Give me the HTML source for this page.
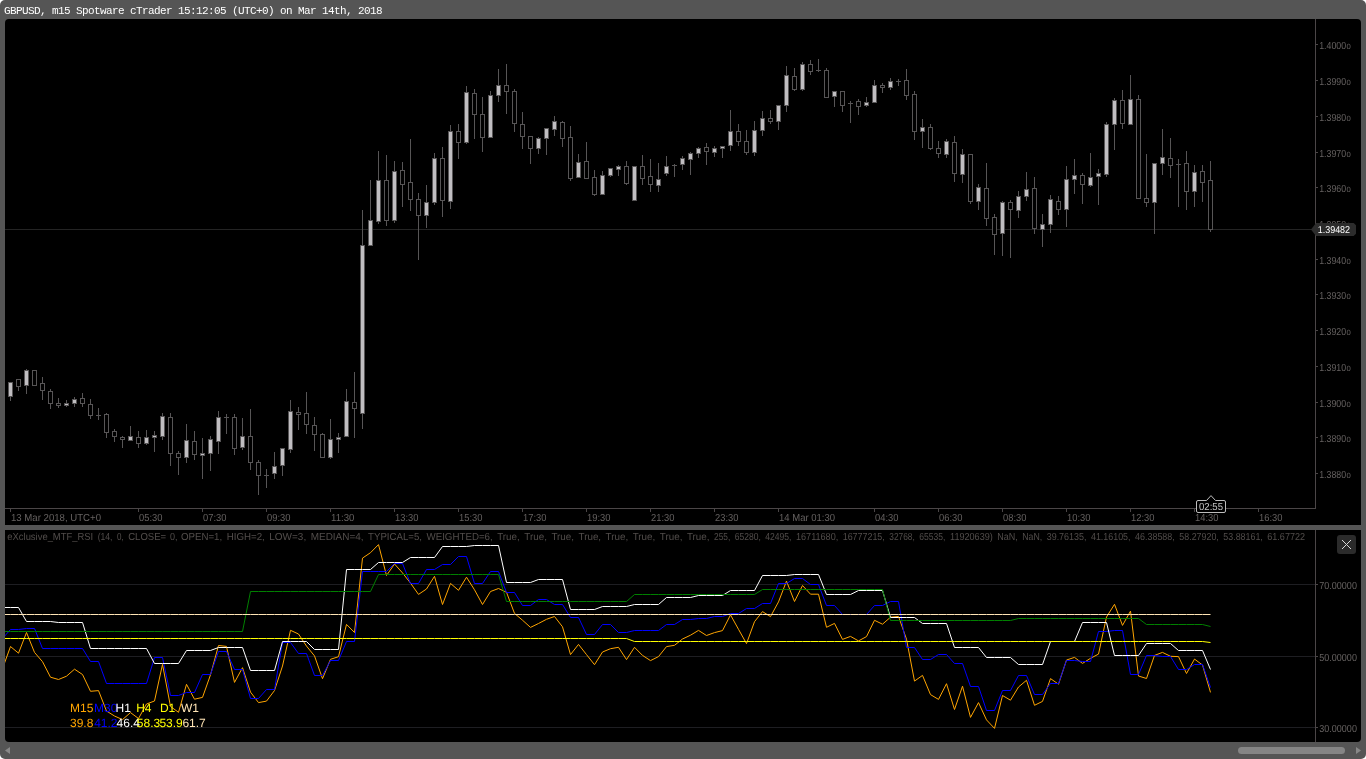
<!DOCTYPE html>
<html lang="en"><head><meta charset="utf-8"><title>GBPUSD m15 cTrader chart</title>
<style>
html,body{margin:0;padding:0;background:#fff;}
body{width:1366px;height:759px;overflow:hidden;position:relative;}
#app{position:absolute;left:0;top:0;width:1366px;height:759px;background:#555;border-radius:5px;overflow:hidden;}
#title{position:absolute;left:4.3px;top:3.7px;will-change:transform;font:11px/14px "Liberation Mono","DejaVu Sans Mono",monospace;color:#fff;white-space:pre;letter-spacing:-0.6px;}
.panel{position:absolute;background:#000;border-radius:3px;}
#p1{left:5px;top:19px;width:1356px;height:506px;border-radius:4px 4px 0 0;}
#p2{left:5px;top:530px;width:1356px;height:212px;border-radius:0 0 4px 4px;}
svg{position:absolute;left:0;top:0;will-change:transform;}
text{font-family:"Liberation Sans",sans-serif;text-rendering:geometricPrecision;}
.ax{font-size:10.2px;fill:#656160;}
.sm{font-size:7.6px;fill:#656160;}
.lg{font-size:12px;}
</style></head><body>
<div id="app">
<div id="title">GBPUSD, m15 Spotware cTrader 15:12:05 (UTC+0) on Mar 14th, 2018</div>
<div class="panel" id="p1"></div><div class="panel" id="p2"></div>
<svg width="1366" height="759" viewBox="0 0 1366 759">
<g shape-rendering="crispEdges" fill="#4b4647">
<rect x="1315" y="19" width="1" height="490"/>
<rect x="5" y="508" width="1311" height="1"/>
<rect x="1316" y="44" width="2" height="1"/>
<rect x="1316" y="80" width="2" height="1"/>
<rect x="1316" y="116" width="2" height="1"/>
<rect x="1316" y="152" width="2" height="1"/>
<rect x="1316" y="187" width="2" height="1"/>
<rect x="1316" y="223" width="2" height="1"/>
<rect x="1316" y="259" width="2" height="1"/>
<rect x="1316" y="294" width="2" height="1"/>
<rect x="1316" y="330" width="2" height="1"/>
<rect x="1316" y="366" width="2" height="1"/>
<rect x="1316" y="402" width="2" height="1"/>
<rect x="1316" y="437" width="2" height="1"/>
<rect x="1316" y="473" width="2" height="1"/>
<rect x="10" y="509" width="1" height="3"/>
<rect x="138" y="509" width="1" height="3"/>
<rect x="202" y="509" width="1" height="3"/>
<rect x="266" y="509" width="1" height="3"/>
<rect x="330" y="509" width="1" height="3"/>
<rect x="394" y="509" width="1" height="3"/>
<rect x="458" y="509" width="1" height="3"/>
<rect x="522" y="509" width="1" height="3"/>
<rect x="586" y="509" width="1" height="3"/>
<rect x="650" y="509" width="1" height="3"/>
<rect x="714" y="509" width="1" height="3"/>
<rect x="778" y="509" width="1" height="3"/>
<rect x="874" y="509" width="1" height="3"/>
<rect x="938" y="509" width="1" height="3"/>
<rect x="1002" y="509" width="1" height="3"/>
<rect x="1066" y="509" width="1" height="3"/>
<rect x="1130" y="509" width="1" height="3"/>
<rect x="1194" y="509" width="1" height="3"/>
<rect x="1258" y="509" width="1" height="3"/>
</g>
<rect x="5" y="229" width="1310" height="1" fill="#242424" shape-rendering="crispEdges"/>
<text class="ax" x="1319.2" y="49.1" textLength="26.9" lengthAdjust="spacingAndGlyphs">1.4000</text><text class="sm" x="1346.6" y="49.1" textLength="4.3" lengthAdjust="spacingAndGlyphs">0</text>
<text class="ax" x="1319.2" y="85.1" textLength="26.9" lengthAdjust="spacingAndGlyphs">1.3990</text><text class="sm" x="1346.6" y="85.1" textLength="4.3" lengthAdjust="spacingAndGlyphs">0</text>
<text class="ax" x="1319.2" y="121.1" textLength="26.9" lengthAdjust="spacingAndGlyphs">1.3980</text><text class="sm" x="1346.6" y="121.1" textLength="4.3" lengthAdjust="spacingAndGlyphs">0</text>
<text class="ax" x="1319.2" y="157.1" textLength="26.9" lengthAdjust="spacingAndGlyphs">1.3970</text><text class="sm" x="1346.6" y="157.1" textLength="4.3" lengthAdjust="spacingAndGlyphs">0</text>
<text class="ax" x="1319.2" y="192.1" textLength="26.9" lengthAdjust="spacingAndGlyphs">1.3960</text><text class="sm" x="1346.6" y="192.1" textLength="4.3" lengthAdjust="spacingAndGlyphs">0</text>
<text class="ax" x="1319.2" y="228.1" textLength="26.9" lengthAdjust="spacingAndGlyphs">1.3950</text><text class="sm" x="1346.6" y="228.1" textLength="4.3" lengthAdjust="spacingAndGlyphs">0</text>
<text class="ax" x="1319.2" y="264.1" textLength="26.9" lengthAdjust="spacingAndGlyphs">1.3940</text><text class="sm" x="1346.6" y="264.1" textLength="4.3" lengthAdjust="spacingAndGlyphs">0</text>
<text class="ax" x="1319.2" y="299.1" textLength="26.9" lengthAdjust="spacingAndGlyphs">1.3930</text><text class="sm" x="1346.6" y="299.1" textLength="4.3" lengthAdjust="spacingAndGlyphs">0</text>
<text class="ax" x="1319.2" y="335.1" textLength="26.9" lengthAdjust="spacingAndGlyphs">1.3920</text><text class="sm" x="1346.6" y="335.1" textLength="4.3" lengthAdjust="spacingAndGlyphs">0</text>
<text class="ax" x="1319.2" y="371.1" textLength="26.9" lengthAdjust="spacingAndGlyphs">1.3910</text><text class="sm" x="1346.6" y="371.1" textLength="4.3" lengthAdjust="spacingAndGlyphs">0</text>
<text class="ax" x="1319.2" y="407.1" textLength="26.9" lengthAdjust="spacingAndGlyphs">1.3900</text><text class="sm" x="1346.6" y="407.1" textLength="4.3" lengthAdjust="spacingAndGlyphs">0</text>
<text class="ax" x="1319.2" y="442.1" textLength="26.9" lengthAdjust="spacingAndGlyphs">1.3890</text><text class="sm" x="1346.6" y="442.1" textLength="4.3" lengthAdjust="spacingAndGlyphs">0</text>
<text class="ax" x="1319.2" y="478.1" textLength="26.9" lengthAdjust="spacingAndGlyphs">1.3880</text><text class="sm" x="1346.6" y="478.1" textLength="4.3" lengthAdjust="spacingAndGlyphs">0</text>
<text class="ax" x="11" y="521.1" textLength="90" lengthAdjust="spacingAndGlyphs">13 Mar 2018, UTC+0</text>
<text class="ax" x="139" y="521.1" textLength="23.4" lengthAdjust="spacingAndGlyphs">05:30</text>
<text class="ax" x="203" y="521.1" textLength="23.4" lengthAdjust="spacingAndGlyphs">07:30</text>
<text class="ax" x="267" y="521.1" textLength="23.4" lengthAdjust="spacingAndGlyphs">09:30</text>
<text class="ax" x="331" y="521.1" textLength="23.4" lengthAdjust="spacingAndGlyphs">11:30</text>
<text class="ax" x="395" y="521.1" textLength="23.4" lengthAdjust="spacingAndGlyphs">13:30</text>
<text class="ax" x="459" y="521.1" textLength="23.4" lengthAdjust="spacingAndGlyphs">15:30</text>
<text class="ax" x="523" y="521.1" textLength="23.4" lengthAdjust="spacingAndGlyphs">17:30</text>
<text class="ax" x="587" y="521.1" textLength="23.4" lengthAdjust="spacingAndGlyphs">19:30</text>
<text class="ax" x="651" y="521.1" textLength="23.4" lengthAdjust="spacingAndGlyphs">21:30</text>
<text class="ax" x="715" y="521.1" textLength="23.4" lengthAdjust="spacingAndGlyphs">23:30</text>
<text class="ax" x="779" y="521.1" textLength="56" lengthAdjust="spacingAndGlyphs">14 Mar 01:30</text>
<text class="ax" x="875" y="521.1" textLength="23.4" lengthAdjust="spacingAndGlyphs">04:30</text>
<text class="ax" x="939" y="521.1" textLength="23.4" lengthAdjust="spacingAndGlyphs">06:30</text>
<text class="ax" x="1003" y="521.1" textLength="23.4" lengthAdjust="spacingAndGlyphs">08:30</text>
<text class="ax" x="1067" y="521.1" textLength="23.4" lengthAdjust="spacingAndGlyphs">10:30</text>
<text class="ax" x="1131" y="521.1" textLength="23.4" lengthAdjust="spacingAndGlyphs">12:30</text>
<text class="ax" x="1195" y="521.1" textLength="23.4" lengthAdjust="spacingAndGlyphs">14:30</text>
<text class="ax" x="1259" y="521.1" textLength="23.4" lengthAdjust="spacingAndGlyphs">16:30</text>
<g shape-rendering="crispEdges">
<rect x="10" y="382" width="1" height="19" fill="#575556"/>
<rect x="8" y="382" width="5" height="15" fill="#575556"/>
<rect x="9" y="383" width="3" height="13" fill="#c0bec1"/>
<rect x="18" y="379" width="1" height="12" fill="#575556"/>
<rect x="16" y="379" width="5" height="8" fill="#575556"/>
<rect x="17" y="380" width="3" height="6" fill="#000"/>
<rect x="26" y="369" width="1" height="25" fill="#575556"/>
<rect x="24" y="370" width="5" height="16" fill="#575556"/>
<rect x="25" y="371" width="3" height="14" fill="#c0bec1"/>
<rect x="34" y="370" width="1" height="16" fill="#575556"/>
<rect x="32" y="370" width="5" height="16" fill="#575556"/>
<rect x="33" y="371" width="3" height="14" fill="#000"/>
<rect x="42" y="377" width="1" height="23" fill="#575556"/>
<rect x="40" y="383" width="5" height="8" fill="#575556"/>
<rect x="41" y="384" width="3" height="6" fill="#000"/>
<rect x="50" y="389" width="1" height="20" fill="#575556"/>
<rect x="48" y="391" width="5" height="13" fill="#575556"/>
<rect x="49" y="392" width="3" height="11" fill="#000"/>
<rect x="58" y="398" width="1" height="10" fill="#575556"/>
<rect x="56" y="403" width="5" height="3" fill="#575556"/>
<rect x="57" y="404" width="3" height="1" fill="#000"/>
<rect x="66" y="400" width="1" height="7" fill="#575556"/>
<rect x="64" y="403" width="5" height="3" fill="#575556"/>
<rect x="65" y="404" width="3" height="1" fill="#c0bec1"/>
<rect x="74" y="397" width="1" height="10" fill="#575556"/>
<rect x="72" y="399" width="5" height="5" fill="#575556"/>
<rect x="73" y="400" width="3" height="3" fill="#c0bec1"/>
<rect x="82" y="393" width="1" height="14" fill="#575556"/>
<rect x="80" y="398" width="5" height="6" fill="#575556"/>
<rect x="81" y="399" width="3" height="4" fill="#000"/>
<rect x="90" y="399" width="1" height="20" fill="#575556"/>
<rect x="88" y="404" width="5" height="12" fill="#575556"/>
<rect x="89" y="405" width="3" height="10" fill="#000"/>
<rect x="98" y="408" width="1" height="12" fill="#575556"/>
<rect x="96" y="415" width="5" height="1" fill="#575556"/>
<rect x="106" y="413" width="1" height="25" fill="#575556"/>
<rect x="104" y="414" width="5" height="19" fill="#575556"/>
<rect x="105" y="415" width="3" height="17" fill="#000"/>
<rect x="114" y="429" width="1" height="13" fill="#575556"/>
<rect x="112" y="431" width="5" height="6" fill="#575556"/>
<rect x="113" y="432" width="3" height="4" fill="#000"/>
<rect x="122" y="436" width="1" height="12" fill="#575556"/>
<rect x="120" y="437" width="5" height="3" fill="#575556"/>
<rect x="121" y="438" width="3" height="1" fill="#000"/>
<rect x="130" y="426" width="1" height="15" fill="#575556"/>
<rect x="128" y="436" width="5" height="5" fill="#575556"/>
<rect x="129" y="437" width="3" height="3" fill="#c0bec1"/>
<rect x="138" y="431" width="1" height="17" fill="#575556"/>
<rect x="136" y="437" width="5" height="7" fill="#575556"/>
<rect x="137" y="438" width="3" height="5" fill="#000"/>
<rect x="146" y="430" width="1" height="15" fill="#575556"/>
<rect x="144" y="437" width="5" height="7" fill="#575556"/>
<rect x="145" y="438" width="3" height="5" fill="#c0bec1"/>
<rect x="154" y="431" width="1" height="21" fill="#575556"/>
<rect x="152" y="435" width="5" height="3" fill="#575556"/>
<rect x="153" y="436" width="3" height="1" fill="#c0bec1"/>
<rect x="162" y="413" width="1" height="27" fill="#575556"/>
<rect x="160" y="416" width="5" height="21" fill="#575556"/>
<rect x="161" y="417" width="3" height="19" fill="#c0bec1"/>
<rect x="170" y="413" width="1" height="53" fill="#575556"/>
<rect x="168" y="417" width="5" height="37" fill="#575556"/>
<rect x="169" y="418" width="3" height="35" fill="#000"/>
<rect x="178" y="451" width="1" height="24" fill="#575556"/>
<rect x="176" y="453" width="5" height="5" fill="#575556"/>
<rect x="177" y="454" width="3" height="3" fill="#000"/>
<rect x="186" y="424" width="1" height="39" fill="#575556"/>
<rect x="184" y="440" width="5" height="18" fill="#575556"/>
<rect x="185" y="441" width="3" height="16" fill="#c0bec1"/>
<rect x="194" y="431" width="1" height="29" fill="#575556"/>
<rect x="192" y="441" width="5" height="14" fill="#575556"/>
<rect x="193" y="442" width="3" height="12" fill="#000"/>
<rect x="202" y="438" width="1" height="41" fill="#575556"/>
<rect x="200" y="453" width="5" height="3" fill="#575556"/>
<rect x="201" y="454" width="3" height="1" fill="#c0bec1"/>
<rect x="210" y="436" width="1" height="35" fill="#575556"/>
<rect x="208" y="439" width="5" height="15" fill="#575556"/>
<rect x="209" y="440" width="3" height="13" fill="#c0bec1"/>
<rect x="218" y="411" width="1" height="43" fill="#575556"/>
<rect x="216" y="417" width="5" height="25" fill="#575556"/>
<rect x="217" y="418" width="3" height="23" fill="#c0bec1"/>
<rect x="226" y="414" width="1" height="20" fill="#575556"/>
<rect x="224" y="417" width="5" height="1" fill="#575556"/>
<rect x="234" y="414" width="1" height="41" fill="#575556"/>
<rect x="232" y="417" width="5" height="32" fill="#575556"/>
<rect x="233" y="418" width="3" height="30" fill="#000"/>
<rect x="242" y="418" width="1" height="32" fill="#575556"/>
<rect x="240" y="436" width="5" height="12" fill="#575556"/>
<rect x="241" y="437" width="3" height="10" fill="#c0bec1"/>
<rect x="250" y="409" width="1" height="61" fill="#575556"/>
<rect x="248" y="436" width="5" height="27" fill="#575556"/>
<rect x="249" y="437" width="3" height="25" fill="#000"/>
<rect x="258" y="460" width="1" height="35" fill="#575556"/>
<rect x="256" y="462" width="5" height="14" fill="#575556"/>
<rect x="257" y="463" width="3" height="12" fill="#000"/>
<rect x="266" y="469" width="1" height="19" fill="#575556"/>
<rect x="264" y="475" width="5" height="1" fill="#575556"/>
<rect x="274" y="452" width="1" height="27" fill="#575556"/>
<rect x="272" y="466" width="5" height="8" fill="#575556"/>
<rect x="273" y="467" width="3" height="6" fill="#c0bec1"/>
<rect x="282" y="448" width="1" height="28" fill="#575556"/>
<rect x="280" y="448" width="5" height="18" fill="#575556"/>
<rect x="281" y="449" width="3" height="16" fill="#c0bec1"/>
<rect x="290" y="400" width="1" height="53" fill="#575556"/>
<rect x="288" y="411" width="5" height="39" fill="#575556"/>
<rect x="289" y="412" width="3" height="37" fill="#c0bec1"/>
<rect x="298" y="407" width="1" height="23" fill="#575556"/>
<rect x="296" y="412" width="5" height="3" fill="#575556"/>
<rect x="297" y="413" width="3" height="1" fill="#000"/>
<rect x="306" y="392" width="1" height="42" fill="#575556"/>
<rect x="304" y="413" width="5" height="12" fill="#575556"/>
<rect x="305" y="414" width="3" height="10" fill="#000"/>
<rect x="314" y="417" width="1" height="34" fill="#575556"/>
<rect x="312" y="425" width="5" height="10" fill="#575556"/>
<rect x="313" y="426" width="3" height="8" fill="#000"/>
<rect x="322" y="433" width="1" height="25" fill="#575556"/>
<rect x="320" y="434" width="5" height="24" fill="#575556"/>
<rect x="321" y="435" width="3" height="22" fill="#000"/>
<rect x="330" y="419" width="1" height="40" fill="#575556"/>
<rect x="328" y="439" width="5" height="19" fill="#575556"/>
<rect x="329" y="440" width="3" height="17" fill="#c0bec1"/>
<rect x="338" y="433" width="1" height="20" fill="#575556"/>
<rect x="336" y="437" width="5" height="3" fill="#575556"/>
<rect x="337" y="438" width="3" height="1" fill="#c0bec1"/>
<rect x="346" y="389" width="1" height="48" fill="#575556"/>
<rect x="344" y="401" width="5" height="36" fill="#575556"/>
<rect x="345" y="402" width="3" height="34" fill="#c0bec1"/>
<rect x="354" y="372" width="1" height="66" fill="#575556"/>
<rect x="352" y="402" width="5" height="7" fill="#575556"/>
<rect x="353" y="403" width="3" height="5" fill="#000"/>
<rect x="362" y="210" width="1" height="219" fill="#575556"/>
<rect x="360" y="245" width="5" height="169" fill="#575556"/>
<rect x="361" y="246" width="3" height="167" fill="#c0bec1"/>
<rect x="370" y="180" width="1" height="66" fill="#575556"/>
<rect x="368" y="220" width="5" height="26" fill="#575556"/>
<rect x="369" y="221" width="3" height="24" fill="#c0bec1"/>
<rect x="378" y="151" width="1" height="73" fill="#575556"/>
<rect x="376" y="180" width="5" height="42" fill="#575556"/>
<rect x="377" y="181" width="3" height="40" fill="#c0bec1"/>
<rect x="386" y="155" width="1" height="71" fill="#575556"/>
<rect x="384" y="180" width="5" height="41" fill="#575556"/>
<rect x="385" y="181" width="3" height="39" fill="#000"/>
<rect x="394" y="161" width="1" height="62" fill="#575556"/>
<rect x="392" y="171" width="5" height="50" fill="#575556"/>
<rect x="393" y="172" width="3" height="48" fill="#c0bec1"/>
<rect x="402" y="162" width="1" height="45" fill="#575556"/>
<rect x="400" y="170" width="5" height="15" fill="#575556"/>
<rect x="401" y="171" width="3" height="13" fill="#000"/>
<rect x="410" y="139" width="1" height="72" fill="#575556"/>
<rect x="408" y="182" width="5" height="18" fill="#575556"/>
<rect x="409" y="183" width="3" height="16" fill="#000"/>
<rect x="418" y="193" width="1" height="67" fill="#575556"/>
<rect x="416" y="199" width="5" height="17" fill="#575556"/>
<rect x="417" y="200" width="3" height="15" fill="#000"/>
<rect x="426" y="185" width="1" height="43" fill="#575556"/>
<rect x="424" y="202" width="5" height="14" fill="#575556"/>
<rect x="425" y="203" width="3" height="12" fill="#c0bec1"/>
<rect x="434" y="153" width="1" height="52" fill="#575556"/>
<rect x="432" y="158" width="5" height="45" fill="#575556"/>
<rect x="433" y="159" width="3" height="43" fill="#c0bec1"/>
<rect x="442" y="147" width="1" height="70" fill="#575556"/>
<rect x="440" y="158" width="5" height="43" fill="#575556"/>
<rect x="441" y="159" width="3" height="41" fill="#000"/>
<rect x="450" y="125" width="1" height="84" fill="#575556"/>
<rect x="448" y="131" width="5" height="71" fill="#575556"/>
<rect x="449" y="132" width="3" height="69" fill="#c0bec1"/>
<rect x="458" y="124" width="1" height="35" fill="#575556"/>
<rect x="456" y="131" width="5" height="12" fill="#575556"/>
<rect x="457" y="132" width="3" height="10" fill="#000"/>
<rect x="466" y="86" width="1" height="58" fill="#575556"/>
<rect x="464" y="92" width="5" height="51" fill="#575556"/>
<rect x="465" y="93" width="3" height="49" fill="#c0bec1"/>
<rect x="474" y="89" width="1" height="50" fill="#575556"/>
<rect x="472" y="93" width="5" height="22" fill="#575556"/>
<rect x="473" y="94" width="3" height="20" fill="#000"/>
<rect x="482" y="97" width="1" height="55" fill="#575556"/>
<rect x="480" y="114" width="5" height="24" fill="#575556"/>
<rect x="481" y="115" width="3" height="22" fill="#000"/>
<rect x="490" y="91" width="1" height="47" fill="#575556"/>
<rect x="488" y="95" width="5" height="43" fill="#575556"/>
<rect x="489" y="96" width="3" height="41" fill="#c0bec1"/>
<rect x="498" y="69" width="1" height="33" fill="#575556"/>
<rect x="496" y="85" width="5" height="11" fill="#575556"/>
<rect x="497" y="86" width="3" height="9" fill="#c0bec1"/>
<rect x="506" y="64" width="1" height="50" fill="#575556"/>
<rect x="504" y="85" width="5" height="7" fill="#575556"/>
<rect x="505" y="86" width="3" height="5" fill="#000"/>
<rect x="514" y="89" width="1" height="43" fill="#575556"/>
<rect x="512" y="91" width="5" height="33" fill="#575556"/>
<rect x="513" y="92" width="3" height="31" fill="#000"/>
<rect x="522" y="112" width="1" height="37" fill="#575556"/>
<rect x="520" y="124" width="5" height="13" fill="#575556"/>
<rect x="521" y="125" width="3" height="11" fill="#000"/>
<rect x="530" y="136" width="1" height="28" fill="#575556"/>
<rect x="528" y="136" width="5" height="13" fill="#575556"/>
<rect x="529" y="137" width="3" height="11" fill="#000"/>
<rect x="538" y="137" width="1" height="17" fill="#575556"/>
<rect x="536" y="138" width="5" height="11" fill="#575556"/>
<rect x="537" y="139" width="3" height="9" fill="#c0bec1"/>
<rect x="546" y="128" width="1" height="27" fill="#575556"/>
<rect x="544" y="128" width="5" height="11" fill="#575556"/>
<rect x="545" y="129" width="3" height="9" fill="#c0bec1"/>
<rect x="554" y="116" width="1" height="20" fill="#575556"/>
<rect x="552" y="121" width="5" height="9" fill="#575556"/>
<rect x="553" y="122" width="3" height="7" fill="#c0bec1"/>
<rect x="562" y="121" width="1" height="26" fill="#575556"/>
<rect x="560" y="122" width="5" height="17" fill="#575556"/>
<rect x="561" y="123" width="3" height="15" fill="#000"/>
<rect x="570" y="126" width="1" height="55" fill="#575556"/>
<rect x="568" y="137" width="5" height="42" fill="#575556"/>
<rect x="569" y="138" width="3" height="40" fill="#000"/>
<rect x="578" y="154" width="1" height="24" fill="#575556"/>
<rect x="576" y="162" width="5" height="16" fill="#575556"/>
<rect x="577" y="163" width="3" height="14" fill="#c0bec1"/>
<rect x="586" y="142" width="1" height="37" fill="#575556"/>
<rect x="584" y="161" width="5" height="18" fill="#575556"/>
<rect x="585" y="162" width="3" height="16" fill="#000"/>
<rect x="594" y="170" width="1" height="26" fill="#575556"/>
<rect x="592" y="177" width="5" height="18" fill="#575556"/>
<rect x="593" y="178" width="3" height="16" fill="#000"/>
<rect x="602" y="171" width="1" height="24" fill="#575556"/>
<rect x="600" y="175" width="5" height="20" fill="#575556"/>
<rect x="601" y="176" width="3" height="18" fill="#c0bec1"/>
<rect x="610" y="168" width="1" height="9" fill="#575556"/>
<rect x="608" y="168" width="5" height="8" fill="#575556"/>
<rect x="609" y="169" width="3" height="6" fill="#c0bec1"/>
<rect x="618" y="165" width="1" height="11" fill="#575556"/>
<rect x="616" y="166" width="5" height="4" fill="#575556"/>
<rect x="617" y="167" width="3" height="2" fill="#c0bec1"/>
<rect x="626" y="161" width="1" height="24" fill="#575556"/>
<rect x="624" y="166" width="5" height="18" fill="#575556"/>
<rect x="625" y="167" width="3" height="16" fill="#000"/>
<rect x="634" y="166" width="1" height="35" fill="#575556"/>
<rect x="632" y="166" width="5" height="35" fill="#575556"/>
<rect x="633" y="167" width="3" height="33" fill="#c0bec1"/>
<rect x="642" y="155" width="1" height="30" fill="#575556"/>
<rect x="640" y="166" width="5" height="13" fill="#575556"/>
<rect x="641" y="167" width="3" height="11" fill="#000"/>
<rect x="650" y="159" width="1" height="33" fill="#575556"/>
<rect x="648" y="176" width="5" height="9" fill="#575556"/>
<rect x="649" y="177" width="3" height="7" fill="#000"/>
<rect x="658" y="163" width="1" height="29" fill="#575556"/>
<rect x="656" y="179" width="5" height="7" fill="#575556"/>
<rect x="657" y="180" width="3" height="5" fill="#c0bec1"/>
<rect x="666" y="156" width="1" height="20" fill="#575556"/>
<rect x="664" y="166" width="5" height="8" fill="#575556"/>
<rect x="665" y="167" width="3" height="6" fill="#c0bec1"/>
<rect x="674" y="164" width="1" height="13" fill="#575556"/>
<rect x="672" y="165" width="5" height="1" fill="#575556"/>
<rect x="682" y="156" width="1" height="14" fill="#575556"/>
<rect x="680" y="158" width="5" height="7" fill="#575556"/>
<rect x="681" y="159" width="3" height="5" fill="#c0bec1"/>
<rect x="690" y="152" width="1" height="23" fill="#575556"/>
<rect x="688" y="153" width="5" height="7" fill="#575556"/>
<rect x="689" y="154" width="3" height="5" fill="#c0bec1"/>
<rect x="698" y="147" width="1" height="11" fill="#575556"/>
<rect x="696" y="148" width="5" height="6" fill="#575556"/>
<rect x="697" y="149" width="3" height="4" fill="#c0bec1"/>
<rect x="706" y="143" width="1" height="22" fill="#575556"/>
<rect x="704" y="147" width="5" height="5" fill="#575556"/>
<rect x="705" y="148" width="3" height="3" fill="#000"/>
<rect x="714" y="146" width="1" height="11" fill="#575556"/>
<rect x="712" y="148" width="5" height="5" fill="#575556"/>
<rect x="713" y="149" width="3" height="3" fill="#c0bec1"/>
<rect x="722" y="146" width="1" height="12" fill="#575556"/>
<rect x="720" y="146" width="5" height="3" fill="#575556"/>
<rect x="721" y="147" width="3" height="1" fill="#c0bec1"/>
<rect x="730" y="110" width="1" height="41" fill="#575556"/>
<rect x="728" y="131" width="5" height="15" fill="#575556"/>
<rect x="729" y="132" width="3" height="13" fill="#c0bec1"/>
<rect x="738" y="124" width="1" height="22" fill="#575556"/>
<rect x="736" y="131" width="5" height="11" fill="#575556"/>
<rect x="737" y="132" width="3" height="9" fill="#000"/>
<rect x="746" y="130" width="1" height="25" fill="#575556"/>
<rect x="744" y="141" width="5" height="12" fill="#575556"/>
<rect x="745" y="142" width="3" height="10" fill="#000"/>
<rect x="754" y="121" width="1" height="35" fill="#575556"/>
<rect x="752" y="130" width="5" height="23" fill="#575556"/>
<rect x="753" y="131" width="3" height="21" fill="#c0bec1"/>
<rect x="762" y="111" width="1" height="25" fill="#575556"/>
<rect x="760" y="118" width="5" height="13" fill="#575556"/>
<rect x="761" y="119" width="3" height="11" fill="#c0bec1"/>
<rect x="770" y="110" width="1" height="14" fill="#575556"/>
<rect x="768" y="118" width="5" height="4" fill="#575556"/>
<rect x="769" y="119" width="3" height="2" fill="#000"/>
<rect x="778" y="105" width="1" height="25" fill="#575556"/>
<rect x="776" y="105" width="5" height="17" fill="#575556"/>
<rect x="777" y="106" width="3" height="15" fill="#c0bec1"/>
<rect x="786" y="66" width="1" height="46" fill="#575556"/>
<rect x="784" y="75" width="5" height="31" fill="#575556"/>
<rect x="785" y="76" width="3" height="29" fill="#c0bec1"/>
<rect x="794" y="68" width="1" height="23" fill="#575556"/>
<rect x="792" y="76" width="5" height="14" fill="#575556"/>
<rect x="793" y="77" width="3" height="12" fill="#000"/>
<rect x="802" y="62" width="1" height="29" fill="#575556"/>
<rect x="800" y="64" width="5" height="26" fill="#575556"/>
<rect x="801" y="65" width="3" height="24" fill="#c0bec1"/>
<rect x="810" y="60" width="1" height="15" fill="#575556"/>
<rect x="808" y="64" width="5" height="8" fill="#575556"/>
<rect x="809" y="65" width="3" height="6" fill="#000"/>
<rect x="818" y="59" width="1" height="13" fill="#575556"/>
<rect x="816" y="70" width="5" height="1" fill="#575556"/>
<rect x="826" y="68" width="1" height="30" fill="#575556"/>
<rect x="824" y="70" width="5" height="28" fill="#575556"/>
<rect x="825" y="71" width="3" height="26" fill="#000"/>
<rect x="834" y="91" width="1" height="16" fill="#575556"/>
<rect x="832" y="91" width="5" height="6" fill="#575556"/>
<rect x="833" y="92" width="3" height="4" fill="#c0bec1"/>
<rect x="842" y="91" width="1" height="21" fill="#575556"/>
<rect x="840" y="91" width="5" height="15" fill="#575556"/>
<rect x="841" y="92" width="3" height="13" fill="#000"/>
<rect x="850" y="101" width="1" height="22" fill="#575556"/>
<rect x="848" y="103" width="5" height="1" fill="#575556"/>
<rect x="858" y="99" width="1" height="16" fill="#575556"/>
<rect x="856" y="101" width="5" height="6" fill="#575556"/>
<rect x="857" y="102" width="3" height="4" fill="#000"/>
<rect x="866" y="97" width="1" height="10" fill="#575556"/>
<rect x="864" y="102" width="5" height="4" fill="#575556"/>
<rect x="865" y="103" width="3" height="2" fill="#c0bec1"/>
<rect x="874" y="80" width="1" height="23" fill="#575556"/>
<rect x="872" y="85" width="5" height="18" fill="#575556"/>
<rect x="873" y="86" width="3" height="16" fill="#c0bec1"/>
<rect x="882" y="83" width="1" height="10" fill="#575556"/>
<rect x="880" y="85" width="5" height="3" fill="#575556"/>
<rect x="881" y="86" width="3" height="1" fill="#000"/>
<rect x="890" y="78" width="1" height="12" fill="#575556"/>
<rect x="888" y="81" width="5" height="7" fill="#575556"/>
<rect x="889" y="82" width="3" height="5" fill="#c0bec1"/>
<rect x="898" y="79" width="1" height="7" fill="#575556"/>
<rect x="896" y="81" width="5" height="1" fill="#575556"/>
<rect x="906" y="69" width="1" height="31" fill="#575556"/>
<rect x="904" y="80" width="5" height="16" fill="#575556"/>
<rect x="905" y="81" width="3" height="14" fill="#000"/>
<rect x="914" y="91" width="1" height="49" fill="#575556"/>
<rect x="912" y="94" width="5" height="38" fill="#575556"/>
<rect x="913" y="95" width="3" height="36" fill="#000"/>
<rect x="922" y="119" width="1" height="29" fill="#575556"/>
<rect x="920" y="127" width="5" height="5" fill="#575556"/>
<rect x="921" y="128" width="3" height="3" fill="#c0bec1"/>
<rect x="930" y="124" width="1" height="26" fill="#575556"/>
<rect x="928" y="127" width="5" height="22" fill="#575556"/>
<rect x="929" y="128" width="3" height="20" fill="#000"/>
<rect x="938" y="141" width="1" height="17" fill="#575556"/>
<rect x="936" y="148" width="5" height="6" fill="#575556"/>
<rect x="937" y="149" width="3" height="4" fill="#000"/>
<rect x="946" y="139" width="1" height="19" fill="#575556"/>
<rect x="944" y="141" width="5" height="14" fill="#575556"/>
<rect x="945" y="142" width="3" height="12" fill="#c0bec1"/>
<rect x="954" y="136" width="1" height="46" fill="#575556"/>
<rect x="952" y="142" width="5" height="32" fill="#575556"/>
<rect x="953" y="143" width="3" height="30" fill="#000"/>
<rect x="962" y="149" width="1" height="34" fill="#575556"/>
<rect x="960" y="154" width="5" height="21" fill="#575556"/>
<rect x="961" y="155" width="3" height="19" fill="#c0bec1"/>
<rect x="970" y="154" width="1" height="50" fill="#575556"/>
<rect x="968" y="154" width="5" height="48" fill="#575556"/>
<rect x="969" y="155" width="3" height="46" fill="#000"/>
<rect x="978" y="184" width="1" height="26" fill="#575556"/>
<rect x="976" y="187" width="5" height="15" fill="#575556"/>
<rect x="977" y="188" width="3" height="13" fill="#c0bec1"/>
<rect x="986" y="163" width="1" height="63" fill="#575556"/>
<rect x="984" y="188" width="5" height="31" fill="#575556"/>
<rect x="985" y="189" width="3" height="29" fill="#000"/>
<rect x="994" y="214" width="1" height="41" fill="#575556"/>
<rect x="992" y="217" width="5" height="18" fill="#575556"/>
<rect x="993" y="218" width="3" height="16" fill="#000"/>
<rect x="1002" y="201" width="1" height="55" fill="#575556"/>
<rect x="1000" y="202" width="5" height="32" fill="#575556"/>
<rect x="1001" y="203" width="3" height="30" fill="#c0bec1"/>
<rect x="1010" y="200" width="1" height="58" fill="#575556"/>
<rect x="1008" y="202" width="5" height="8" fill="#575556"/>
<rect x="1009" y="203" width="3" height="6" fill="#000"/>
<rect x="1018" y="191" width="1" height="27" fill="#575556"/>
<rect x="1016" y="196" width="5" height="15" fill="#575556"/>
<rect x="1017" y="197" width="3" height="13" fill="#c0bec1"/>
<rect x="1026" y="172" width="1" height="29" fill="#575556"/>
<rect x="1024" y="189" width="5" height="8" fill="#575556"/>
<rect x="1025" y="190" width="3" height="6" fill="#c0bec1"/>
<rect x="1034" y="177" width="1" height="57" fill="#575556"/>
<rect x="1032" y="188" width="5" height="41" fill="#575556"/>
<rect x="1033" y="189" width="3" height="39" fill="#000"/>
<rect x="1042" y="214" width="1" height="33" fill="#575556"/>
<rect x="1040" y="224" width="5" height="6" fill="#575556"/>
<rect x="1041" y="225" width="3" height="4" fill="#c0bec1"/>
<rect x="1050" y="195" width="1" height="38" fill="#575556"/>
<rect x="1048" y="199" width="5" height="26" fill="#575556"/>
<rect x="1049" y="200" width="3" height="24" fill="#c0bec1"/>
<rect x="1058" y="196" width="1" height="19" fill="#575556"/>
<rect x="1056" y="201" width="5" height="9" fill="#575556"/>
<rect x="1057" y="202" width="3" height="7" fill="#000"/>
<rect x="1066" y="166" width="1" height="61" fill="#575556"/>
<rect x="1064" y="179" width="5" height="31" fill="#575556"/>
<rect x="1065" y="180" width="3" height="29" fill="#c0bec1"/>
<rect x="1074" y="159" width="1" height="35" fill="#575556"/>
<rect x="1072" y="175" width="5" height="5" fill="#575556"/>
<rect x="1073" y="176" width="3" height="3" fill="#c0bec1"/>
<rect x="1082" y="173" width="1" height="31" fill="#575556"/>
<rect x="1080" y="175" width="5" height="10" fill="#575556"/>
<rect x="1081" y="176" width="3" height="8" fill="#000"/>
<rect x="1090" y="153" width="1" height="34" fill="#575556"/>
<rect x="1088" y="177" width="5" height="9" fill="#575556"/>
<rect x="1089" y="178" width="3" height="7" fill="#c0bec1"/>
<rect x="1098" y="169" width="1" height="36" fill="#575556"/>
<rect x="1096" y="173" width="5" height="4" fill="#575556"/>
<rect x="1097" y="174" width="3" height="2" fill="#c0bec1"/>
<rect x="1106" y="122" width="1" height="55" fill="#575556"/>
<rect x="1104" y="124" width="5" height="51" fill="#575556"/>
<rect x="1105" y="125" width="3" height="49" fill="#c0bec1"/>
<rect x="1114" y="98" width="1" height="52" fill="#575556"/>
<rect x="1112" y="100" width="5" height="25" fill="#575556"/>
<rect x="1113" y="101" width="3" height="23" fill="#c0bec1"/>
<rect x="1122" y="90" width="1" height="39" fill="#575556"/>
<rect x="1120" y="100" width="5" height="24" fill="#575556"/>
<rect x="1121" y="101" width="3" height="22" fill="#000"/>
<rect x="1130" y="75" width="1" height="50" fill="#575556"/>
<rect x="1128" y="99" width="5" height="26" fill="#575556"/>
<rect x="1129" y="100" width="3" height="24" fill="#c0bec1"/>
<rect x="1138" y="95" width="1" height="104" fill="#575556"/>
<rect x="1136" y="99" width="5" height="100" fill="#575556"/>
<rect x="1137" y="100" width="3" height="98" fill="#000"/>
<rect x="1146" y="154" width="1" height="53" fill="#575556"/>
<rect x="1144" y="198" width="5" height="5" fill="#575556"/>
<rect x="1145" y="199" width="3" height="3" fill="#000"/>
<rect x="1154" y="163" width="1" height="71" fill="#575556"/>
<rect x="1152" y="163" width="5" height="40" fill="#575556"/>
<rect x="1153" y="164" width="3" height="38" fill="#c0bec1"/>
<rect x="1162" y="129" width="1" height="46" fill="#575556"/>
<rect x="1160" y="157" width="5" height="7" fill="#575556"/>
<rect x="1161" y="158" width="3" height="5" fill="#c0bec1"/>
<rect x="1170" y="138" width="1" height="40" fill="#575556"/>
<rect x="1168" y="158" width="5" height="8" fill="#575556"/>
<rect x="1169" y="159" width="3" height="6" fill="#000"/>
<rect x="1178" y="159" width="1" height="48" fill="#575556"/>
<rect x="1176" y="164" width="5" height="1" fill="#575556"/>
<rect x="1186" y="151" width="1" height="59" fill="#575556"/>
<rect x="1184" y="163" width="5" height="29" fill="#575556"/>
<rect x="1185" y="164" width="3" height="27" fill="#000"/>
<rect x="1194" y="165" width="1" height="42" fill="#575556"/>
<rect x="1192" y="172" width="5" height="20" fill="#575556"/>
<rect x="1193" y="173" width="3" height="18" fill="#c0bec1"/>
<rect x="1202" y="165" width="1" height="37" fill="#575556"/>
<rect x="1200" y="171" width="5" height="12" fill="#575556"/>
<rect x="1201" y="172" width="3" height="10" fill="#000"/>
<rect x="1210" y="161" width="1" height="71" fill="#575556"/>
<rect x="1208" y="180" width="5" height="50" fill="#575556"/>
<rect x="1209" y="181" width="3" height="48" fill="#000"/>
</g>
<path d="M1311 229.5 L1316 223 H1353.7 L1356 225.3 V233.7 L1353.7 236 H1316 Z" fill="#2c2c2c"/>
<text x="1317.7" y="233.1" font-size="10" fill="#ffffff" textLength="32.4" lengthAdjust="spacingAndGlyphs">1.39482</text>
<path d="M1198 500.5 H1206.5 L1211 495.6 L1215.5 500.5 H1224 Q1225.5 500.5 1225.5 502 V511 Q1225.5 512.5 1224 512.5 H1198 Q1196.5 512.5 1196.5 511 V502 Q1196.5 500.5 1198 500.5 Z" fill="#000" stroke="#bdbdbd" stroke-width="1"/>
<text x="1199" y="510" font-size="10.2" fill="#c4c4c4" textLength="24" lengthAdjust="spacingAndGlyphs">02:55</text>
<clipPath id="cp"><rect x="5" y="530" width="1310" height="212"/></clipPath>
<g shape-rendering="crispEdges">
<rect x="5" y="584" width="1310" height="1" fill="#1e1e22"/>
<rect x="1316" y="584" width="2" height="1" fill="#4b4647"/>
<rect x="5" y="656" width="1310" height="1" fill="#1e1e22"/>
<rect x="1316" y="656" width="2" height="1" fill="#4b4647"/>
<rect x="5" y="727" width="1310" height="1" fill="#1e1e22"/>
<rect x="1316" y="727" width="2" height="1" fill="#4b4647"/>
<rect x="1315" y="530" width="1" height="212" fill="#4b4647"/>
</g>
<text class="ax" x="1319.3" y="589" textLength="37.6" lengthAdjust="spacingAndGlyphs">70.00000</text>
<text class="ax" x="1319.3" y="661" textLength="37.6" lengthAdjust="spacingAndGlyphs">50.00000</text>
<text class="ax" x="1319.3" y="732" textLength="37.6" lengthAdjust="spacingAndGlyphs">30.00000</text>
<polyline points="2.5,668.6 10.5,646.5 18.5,653.2 26.5,632.5 34.5,652.4 42.5,661.7 50.5,677.2 58.5,679.5 66.5,676.2 74.5,669.2 82.5,674.5 90.5,691.3 98.5,690.6 106.5,711.0 114.5,716.0 122.5,719.6 130.5,712.6 138.5,718.5 146.5,704.0 154.5,701.0 162.5,664.4 170.5,706.5 178.5,712.3 186.5,684.3 194.5,699.2 202.5,697.4 210.5,674.8 218.5,645.5 226.5,646.4 234.5,682.4 242.5,667.7 250.5,692.1 258.5,702.6 266.5,701.1 274.5,690.5 282.5,666.0 290.5,630.3 298.5,634.0 306.5,646.1 314.5,655.9 322.5,678.7 330.5,659.3 338.5,656.7 346.5,624.4 354.5,632.5 362.5,558.1 370.5,552.7 378.5,544.6 386.5,575.5 394.5,564.0 402.5,572.9 410.5,583.1 418.5,594.4 426.5,589.0 434.5,576.3 442.5,604.5 450.5,583.4 458.5,590.3 466.5,577.2 474.5,589.8 482.5,604.5 490.5,591.5 498.5,588.5 506.5,592.3 514.5,613.4 522.5,620.2 530.5,627.4 538.5,623.5 546.5,619.3 554.5,616.5 562.5,626.8 570.5,654.6 578.5,644.4 586.5,654.6 594.5,664.7 602.5,652.0 610.5,648.7 618.5,647.3 626.5,659.6 634.5,647.3 642.5,655.4 650.5,660.6 658.5,656.6 666.5,646.6 674.5,645.3 682.5,639.0 690.5,635.2 698.5,630.4 706.5,635.5 714.5,632.6 722.5,630.6 730.5,614.9 738.5,629.3 746.5,643.6 754.5,621.7 762.5,611.6 770.5,616.6 778.5,601.9 786.5,581.1 794.5,601.5 802.5,585.5 810.5,594.2 818.5,594.2 826.5,627.3 834.5,623.4 842.5,639.4 850.5,636.4 858.5,640.9 866.5,636.6 874.5,620.3 882.5,624.2 890.5,617.2 898.5,616.4 906.5,639.2 914.5,681.1 922.5,675.4 930.5,694.6 938.5,699.4 946.5,683.7 954.5,709.5 962.5,686.2 970.5,717.4 978.5,702.6 986.5,719.9 994.5,728.4 1002.5,695.5 1010.5,700.2 1018.5,687.0 1026.5,680.3 1034.5,705.3 1042.5,701.4 1050.5,678.6 1058.5,684.2 1066.5,660.0 1074.5,657.4 1082.5,663.4 1090.5,658.3 1098.5,654.1 1106.5,617.0 1114.5,604.3 1122.5,625.4 1130.5,611.1 1138.5,676.0 1146.5,678.5 1154.5,655.4 1162.5,652.4 1170.5,656.3 1178.5,656.6 1186.5,673.5 1194.5,659.1 1202.5,665.0 1210.5,692.4" fill="none" stroke="#ffa500" stroke-width="1.0" stroke-linejoin="round" clip-path="url(#cp)"/>
<polyline points="2.5,638.5 10.5,629.5 18.5,629.5 26.5,628.5 34.5,628.5 42.5,648.5 50.5,648.5 58.5,648.5 66.5,648.5 74.5,648.5 82.5,648.5 90.5,661.5 98.5,661.5 106.5,683.5 114.5,683.5 122.5,683.5 130.5,683.5 138.5,683.5 146.5,683.5 154.5,657.5 162.5,657.5 170.5,695.5 178.5,695.5 186.5,692.5 194.5,692.5 202.5,674.5 210.5,674.5 218.5,651.5 226.5,651.5 234.5,669.5 242.5,669.5 250.5,698.5 258.5,698.5 266.5,689.5 274.5,689.5 282.5,642.5 290.5,642.5 298.5,653.5 306.5,653.5 314.5,675.5 322.5,675.5 330.5,660.5 338.5,660.5 346.5,641.5 354.5,641.5 362.5,571.5 370.5,571.5 378.5,571.5 386.5,571.5 394.5,563.5 402.5,563.5 410.5,583.5 418.5,583.5 426.5,569.5 434.5,569.5 442.5,564.5 450.5,564.5 458.5,556.5 466.5,556.5 474.5,583.5 482.5,583.5 490.5,571.5 498.5,571.5 506.5,592.5 514.5,592.5 522.5,605.5 530.5,605.5 538.5,599.5 546.5,599.5 554.5,604.5 562.5,604.5 570.5,617.5 578.5,617.5 586.5,634.5 594.5,634.5 602.5,624.5 610.5,624.5 618.5,632.5 626.5,632.5 634.5,630.5 642.5,630.5 650.5,630.5 658.5,630.5 666.5,624.5 674.5,624.5 682.5,619.5 690.5,619.5 698.5,618.5 706.5,618.5 714.5,616.5 722.5,616.5 730.5,613.5 738.5,613.5 746.5,608.5 754.5,608.5 762.5,603.5 770.5,603.5 778.5,583.5 786.5,583.5 794.5,578.5 802.5,578.5 810.5,584.5 818.5,584.5 826.5,605.5 834.5,605.5 842.5,614.5 850.5,614.5 858.5,614.5 866.5,614.5 874.5,605.5 882.5,605.5 890.5,601.5 898.5,601.5 906.5,647.5 914.5,647.5 922.5,659.5 930.5,659.5 938.5,654.5 946.5,654.5 954.5,663.5 962.5,663.5 970.5,686.5 978.5,686.5 986.5,710.5 994.5,710.5 1002.5,690.5 1010.5,690.5 1018.5,675.5 1026.5,675.5 1034.5,694.5 1042.5,694.5 1050.5,683.5 1058.5,683.5 1066.5,660.5 1074.5,660.5 1082.5,661.5 1090.5,661.5 1098.5,631.5 1106.5,631.5 1114.5,630.5 1122.5,630.5 1130.5,674.5 1138.5,674.5 1146.5,655.5 1154.5,655.5 1162.5,656.5 1170.5,656.5 1178.5,669.5 1186.5,669.5 1194.5,664.5 1202.5,664.5 1210.5,687.5" fill="none" stroke="#0000ff" stroke-width="1.0" stroke-linejoin="round" clip-path="url(#cp)"/>
<polyline points="2.5,607.5 10.5,607.5 18.5,607.5 26.5,621.5 34.5,621.5 42.5,621.5 50.5,621.5 58.5,622.5 66.5,622.5 74.5,622.5 82.5,622.5 90.5,648.5 98.5,648.5 106.5,648.5 114.5,648.5 122.5,648.5 130.5,648.5 138.5,648.5 146.5,648.5 154.5,663.5 162.5,663.5 170.5,663.5 178.5,663.5 186.5,650.5 194.5,650.5 202.5,650.5 210.5,650.5 218.5,647.5 226.5,647.5 234.5,647.5 242.5,647.5 250.5,670.5 258.5,670.5 266.5,670.5 274.5,670.5 282.5,641.5 290.5,641.5 298.5,641.5 306.5,641.5 314.5,649.5 322.5,649.5 330.5,649.5 338.5,649.5 346.5,569.5 354.5,569.5 362.5,569.5 370.5,569.5 378.5,562.5 386.5,562.5 394.5,562.5 402.5,562.5 410.5,557.5 418.5,557.5 426.5,557.5 434.5,557.5 442.5,546.5 450.5,546.5 458.5,546.5 466.5,546.5 474.5,545.5 482.5,545.5 490.5,545.5 498.5,545.5 506.5,582.5 514.5,582.5 522.5,582.5 530.5,582.5 538.5,579.5 546.5,579.5 554.5,579.5 562.5,579.5 570.5,609.5 578.5,609.5 586.5,609.5 594.5,609.5 602.5,606.5 610.5,606.5 618.5,606.5 626.5,606.5 634.5,604.5 642.5,604.5 650.5,604.5 658.5,604.5 666.5,597.5 674.5,597.5 682.5,597.5 690.5,597.5 698.5,595.5 706.5,595.5 714.5,595.5 722.5,595.5 730.5,590.5 738.5,590.5 746.5,590.5 754.5,590.5 762.5,575.5 770.5,575.5 778.5,575.5 786.5,575.5 794.5,574.5 802.5,574.5 810.5,574.5 818.5,574.5 826.5,594.5 834.5,594.5 842.5,594.5 850.5,594.5 858.5,590.5 866.5,590.5 874.5,590.5 882.5,590.5 890.5,617.5 898.5,617.5 906.5,617.5 914.5,617.5 922.5,623.5 930.5,623.5 938.5,623.5 946.5,623.5 954.5,647.5 962.5,647.5 970.5,647.5 978.5,647.5 986.5,657.5 994.5,657.5 1002.5,657.5 1010.5,657.5 1018.5,664.5 1026.5,664.5 1034.5,664.5 1042.5,664.5 1050.5,641.5 1058.5,641.5 1066.5,641.5 1074.5,641.5 1082.5,622.5 1090.5,622.5 1098.5,622.5 1106.5,622.5 1114.5,655.5 1122.5,655.5 1130.5,655.5 1138.5,655.5 1146.5,643.5 1154.5,643.5 1162.5,643.5 1170.5,643.5 1178.5,650.5 1186.5,650.5 1194.5,650.5 1202.5,650.5 1210.5,669.5" fill="none" stroke="#ffffff" stroke-width="1.0" stroke-linejoin="round" clip-path="url(#cp)"/>
<polyline points="2.5,631.5 10.5,631.5 18.5,631.5 26.5,631.5 34.5,631.5 42.5,631.5 50.5,631.5 58.5,631.5 66.5,631.5 74.5,631.5 82.5,631.5 90.5,631.5 98.5,631.5 106.5,631.5 114.5,631.5 122.5,631.5 130.5,631.5 138.5,631.5 146.5,631.5 154.5,631.5 162.5,631.5 170.5,631.5 178.5,631.5 186.5,631.5 194.5,631.5 202.5,631.5 210.5,631.5 218.5,631.5 226.5,631.5 234.5,631.5 242.5,631.5 250.5,591.5 258.5,591.5 266.5,591.5 274.5,591.5 282.5,591.5 290.5,591.5 298.5,591.5 306.5,591.5 314.5,591.5 322.5,591.5 330.5,591.5 338.5,591.5 346.5,591.5 354.5,591.5 362.5,591.5 370.5,591.5 378.5,574.5 386.5,574.5 394.5,574.5 402.5,574.5 410.5,574.5 418.5,574.5 426.5,574.5 434.5,574.5 442.5,574.5 450.5,574.5 458.5,574.5 466.5,574.5 474.5,574.5 482.5,574.5 490.5,574.5 498.5,574.5 506.5,601.5 514.5,601.5 522.5,601.5 530.5,601.5 538.5,601.5 546.5,601.5 554.5,601.5 562.5,601.5 570.5,601.5 578.5,601.5 586.5,601.5 594.5,601.5 602.5,601.5 610.5,601.5 618.5,601.5 626.5,601.5 634.5,594.5 642.5,594.5 650.5,594.5 658.5,594.5 666.5,594.5 674.5,594.5 682.5,594.5 690.5,594.5 698.5,594.5 706.5,594.5 714.5,594.5 722.5,594.5 730.5,594.5 738.5,594.5 746.5,594.5 754.5,594.5 762.5,589.5 770.5,589.5 778.5,589.5 786.5,589.5 794.5,589.5 802.5,589.5 810.5,589.5 818.5,589.5 826.5,589.5 834.5,589.5 842.5,589.5 850.5,589.5 858.5,589.5 866.5,589.5 874.5,589.5 882.5,589.5 890.5,620.5 898.5,620.5 906.5,620.5 914.5,620.5 922.5,620.5 930.5,620.5 938.5,620.5 946.5,620.5 954.5,620.5 962.5,620.5 970.5,620.5 978.5,620.5 986.5,620.5 994.5,620.5 1002.5,620.5 1010.5,620.5 1018.5,618.5 1026.5,618.5 1034.5,618.5 1042.5,618.5 1050.5,618.5 1058.5,618.5 1066.5,618.5 1074.5,618.5 1082.5,618.5 1090.5,618.5 1098.5,618.5 1106.5,618.5 1114.5,618.5 1122.5,618.5 1130.5,618.5 1138.5,618.5 1146.5,624.5 1154.5,624.5 1162.5,624.5 1170.5,624.5 1178.5,624.5 1186.5,624.5 1194.5,624.5 1202.5,624.5 1210.5,626.5" fill="none" stroke="#008000" stroke-width="1.0" stroke-linejoin="round" clip-path="url(#cp)"/>
<polyline points="2.5,638.5 10.5,638.5 18.5,638.5 26.5,638.5 34.5,638.5 42.5,638.5 50.5,638.5 58.5,638.5 66.5,638.5 74.5,638.5 82.5,638.5 90.5,638.5 98.5,638.5 106.5,638.5 114.5,638.5 122.5,638.5 130.5,638.5 138.5,638.5 146.5,638.5 154.5,638.5 162.5,638.5 170.5,638.5 178.5,638.5 186.5,638.5 194.5,638.5 202.5,638.5 210.5,638.5 218.5,638.5 226.5,638.5 234.5,638.5 242.5,638.5 250.5,638.5 258.5,638.5 266.5,638.5 274.5,638.5 282.5,638.5 290.5,638.5 298.5,638.5 306.5,638.5 314.5,638.5 322.5,638.5 330.5,638.5 338.5,638.5 346.5,638.5 354.5,638.5 362.5,638.5 370.5,638.5 378.5,638.5 386.5,638.5 394.5,638.5 402.5,638.5 410.5,638.5 418.5,638.5 426.5,638.5 434.5,638.5 442.5,638.5 450.5,638.5 458.5,638.5 466.5,638.5 474.5,638.5 482.5,638.5 490.5,638.5 498.5,638.5 506.5,638.5 514.5,638.5 522.5,638.5 530.5,638.5 538.5,638.5 546.5,638.5 554.5,638.5 562.5,638.5 570.5,638.5 578.5,638.5 586.5,638.5 594.5,638.5 602.5,638.5 610.5,638.5 618.5,638.5 626.5,638.5 634.5,641.5 642.5,641.5 650.5,641.5 658.5,641.5 666.5,641.5 674.5,641.5 682.5,641.5 690.5,641.5 698.5,641.5 706.5,641.5 714.5,641.5 722.5,641.5 730.5,641.5 738.5,641.5 746.5,641.5 754.5,641.5 762.5,641.5 770.5,641.5 778.5,641.5 786.5,641.5 794.5,641.5 802.5,641.5 810.5,641.5 818.5,641.5 826.5,641.5 834.5,641.5 842.5,641.5 850.5,641.5 858.5,641.5 866.5,641.5 874.5,641.5 882.5,641.5 890.5,641.5 898.5,641.5 906.5,641.5 914.5,641.5 922.5,641.5 930.5,641.5 938.5,641.5 946.5,641.5 954.5,641.5 962.5,641.5 970.5,641.5 978.5,641.5 986.5,641.5 994.5,641.5 1002.5,641.5 1010.5,641.5 1018.5,641.5 1026.5,641.5 1034.5,641.5 1042.5,641.5 1050.5,641.5 1058.5,641.5 1066.5,641.5 1074.5,641.5 1082.5,641.5 1090.5,641.5 1098.5,641.5 1106.5,641.5 1114.5,641.5 1122.5,641.5 1130.5,641.5 1138.5,641.5 1146.5,641.5 1154.5,641.5 1162.5,641.5 1170.5,641.5 1178.5,641.5 1186.5,641.5 1194.5,641.5 1202.5,641.5 1210.5,642.5" fill="none" stroke="#ffff00" stroke-width="1.0" stroke-linejoin="round" clip-path="url(#cp)"/>
<polyline points="2.5,614.5 10.5,614.5 18.5,614.5 26.5,614.5 34.5,614.5 42.5,614.5 50.5,614.5 58.5,614.5 66.5,614.5 74.5,614.5 82.5,614.5 90.5,614.5 98.5,614.5 106.5,614.5 114.5,614.5 122.5,614.5 130.5,614.5 138.5,614.5 146.5,614.5 154.5,614.5 162.5,614.5 170.5,614.5 178.5,614.5 186.5,614.5 194.5,614.5 202.5,614.5 210.5,614.5 218.5,614.5 226.5,614.5 234.5,614.5 242.5,614.5 250.5,614.5 258.5,614.5 266.5,614.5 274.5,614.5 282.5,614.5 290.5,614.5 298.5,614.5 306.5,614.5 314.5,614.5 322.5,614.5 330.5,614.5 338.5,614.5 346.5,614.5 354.5,614.5 362.5,614.5 370.5,614.5 378.5,614.5 386.5,614.5 394.5,614.5 402.5,614.5 410.5,614.5 418.5,614.5 426.5,614.5 434.5,614.5 442.5,614.5 450.5,614.5 458.5,614.5 466.5,614.5 474.5,614.5 482.5,614.5 490.5,614.5 498.5,614.5 506.5,614.5 514.5,614.5 522.5,614.5 530.5,614.5 538.5,614.5 546.5,614.5 554.5,614.5 562.5,614.5 570.5,614.5 578.5,614.5 586.5,614.5 594.5,614.5 602.5,614.5 610.5,614.5 618.5,614.5 626.5,614.5 634.5,614.5 642.5,614.5 650.5,614.5 658.5,614.5 666.5,614.5 674.5,614.5 682.5,614.5 690.5,614.5 698.5,614.5 706.5,614.5 714.5,614.5 722.5,614.5 730.5,614.5 738.5,614.5 746.5,614.5 754.5,614.5 762.5,614.5 770.5,614.5 778.5,614.5 786.5,614.5 794.5,614.5 802.5,614.5 810.5,614.5 818.5,614.5 826.5,614.5 834.5,614.5 842.5,614.5 850.5,614.5 858.5,614.5 866.5,614.5 874.5,614.5 882.5,614.5 890.5,614.5 898.5,614.5 906.5,614.5 914.5,614.5 922.5,614.5 930.5,614.5 938.5,614.5 946.5,614.5 954.5,614.5 962.5,614.5 970.5,614.5 978.5,614.5 986.5,614.5 994.5,614.5 1002.5,614.5 1010.5,614.5 1018.5,614.5 1026.5,614.5 1034.5,614.5 1042.5,614.5 1050.5,614.5 1058.5,614.5 1066.5,614.5 1074.5,614.5 1082.5,614.5 1090.5,614.5 1098.5,614.5 1106.5,614.5 1114.5,614.5 1122.5,614.5 1130.5,614.5 1138.5,614.5 1146.5,614.5 1154.5,614.5 1162.5,614.5 1170.5,614.5 1178.5,614.5 1186.5,614.5 1194.5,614.5 1202.5,614.5 1210.5,614.5" fill="none" stroke="#ffe4b5" stroke-width="1.0" stroke-linejoin="round" clip-path="url(#cp)"/>
<text class="lg" x="70" y="712" fill="#ffa500">M15</text>
<text class="lg" x="94" y="712" fill="#0000ff">M30</text>
<text class="lg" x="115.6" y="712" fill="#ffffff">H1</text>
<text class="lg" x="136.2" y="712" fill="#ffff00">H4</text>
<text class="lg" x="159.9" y="712" fill="#ffff00">D1</text>
<text class="lg" x="181" y="712" fill="#ffe4b5">W1</text>
<text class="lg" x="70" y="727" fill="#ffa500">39.8</text>
<text class="lg" x="94.2" y="727" fill="#0000ff">41.2</text>
<text class="lg" x="116.6" y="727" fill="#ffffff">46.4</text>
<text class="lg" x="136.8" y="727" fill="#ffff00">58.3</text>
<text class="lg" x="159.4" y="727" fill="#ffff00">53.9</text>
<text class="lg" x="182.4" y="727" fill="#ffe4b5">61.7</text>
<g font-size="10.2" fill="#524d4b">
<text x="7.3" y="540" textLength="85.9" lengthAdjust="spacingAndGlyphs">eXclusive_MTF_RSI</text>
<text x="97.7" y="540" textLength="14.8" lengthAdjust="spacingAndGlyphs">(14,</text>
<text x="117" y="540" textLength="6.7" lengthAdjust="spacingAndGlyphs">0,</text>
<text x="128.2" y="540" textLength="38.0" lengthAdjust="spacingAndGlyphs">CLOSE=</text>
<text x="170" y="540" textLength="7.5" lengthAdjust="spacingAndGlyphs">0,</text>
<text x="181" y="540" textLength="41.2" lengthAdjust="spacingAndGlyphs">OPEN=1,</text>
<text x="226.7" y="540" textLength="38.1" lengthAdjust="spacingAndGlyphs">HIGH=2,</text>
<text x="269.3" y="540" textLength="36.9" lengthAdjust="spacingAndGlyphs">LOW=3,</text>
<text x="310.7" y="540" textLength="52.9" lengthAdjust="spacingAndGlyphs">MEDIAN=4,</text>
<text x="368.1" y="540" textLength="53.9" lengthAdjust="spacingAndGlyphs">TYPICAL=5,</text>
<text x="426.5" y="540" textLength="66.2" lengthAdjust="spacingAndGlyphs">WEIGHTED=6,</text>
<text x="497.2" y="540" textLength="22.6" lengthAdjust="spacingAndGlyphs">True,</text>
<text x="524.3" y="540" textLength="22.6" lengthAdjust="spacingAndGlyphs">True,</text>
<text x="551.4" y="540" textLength="22.6" lengthAdjust="spacingAndGlyphs">True,</text>
<text x="578.5" y="540" textLength="22.6" lengthAdjust="spacingAndGlyphs">True,</text>
<text x="605.6" y="540" textLength="22.6" lengthAdjust="spacingAndGlyphs">True,</text>
<text x="632.7" y="540" textLength="22.6" lengthAdjust="spacingAndGlyphs">True,</text>
<text x="659.8" y="540" textLength="22.6" lengthAdjust="spacingAndGlyphs">True,</text>
<text x="686.9" y="540" textLength="22.6" lengthAdjust="spacingAndGlyphs">True,</text>
<text x="714" y="540" textLength="16.2" lengthAdjust="spacingAndGlyphs">255,</text>
<text x="734.7" y="540" textLength="26.1" lengthAdjust="spacingAndGlyphs">65280,</text>
<text x="765.3" y="540" textLength="26.2" lengthAdjust="spacingAndGlyphs">42495,</text>
<text x="796" y="540" textLength="42.2" lengthAdjust="spacingAndGlyphs">16711680,</text>
<text x="842.7" y="540" textLength="42.1" lengthAdjust="spacingAndGlyphs">16777215,</text>
<text x="889.3" y="540" textLength="25.5" lengthAdjust="spacingAndGlyphs">32768,</text>
<text x="919.3" y="540" textLength="26.2" lengthAdjust="spacingAndGlyphs">65535,</text>
<text x="950" y="540" textLength="42.8" lengthAdjust="spacingAndGlyphs">11920639)</text>
<text x="997.3" y="540" textLength="20.5" lengthAdjust="spacingAndGlyphs">NaN,</text>
<text x="1022.3" y="540" textLength="19.9" lengthAdjust="spacingAndGlyphs">NaN,</text>
<text x="1046.7" y="540" textLength="39.8" lengthAdjust="spacingAndGlyphs">39.76135,</text>
<text x="1091" y="540" textLength="39.5" lengthAdjust="spacingAndGlyphs">41.16105,</text>
<text x="1135" y="540" textLength="39.8" lengthAdjust="spacingAndGlyphs">46.38588,</text>
<text x="1179.3" y="540" textLength="39.5" lengthAdjust="spacingAndGlyphs">58.27920,</text>
<text x="1223.3" y="540" textLength="39.5" lengthAdjust="spacingAndGlyphs">53.88161,</text>
<text x="1267.3" y="540" textLength="37.7" lengthAdjust="spacingAndGlyphs">61.67722</text>
</g>
<rect x="1337" y="535" width="19" height="19" rx="3" fill="#2b2b2b"/>
<path d="M1342 540 L1351 549 M1351 540 L1342 549" stroke="#d8d8d8" stroke-width="1" fill="none"/>
<rect x="1238" y="747" width="107" height="7" rx="3.5" fill="#858585"/>
<path d="M5 750.5 L10 747 V754 Z" fill="#888"/>
<path d="M1361 750.5 L1356 747 V754 Z" fill="#888"/>
</svg></div></body></html>
